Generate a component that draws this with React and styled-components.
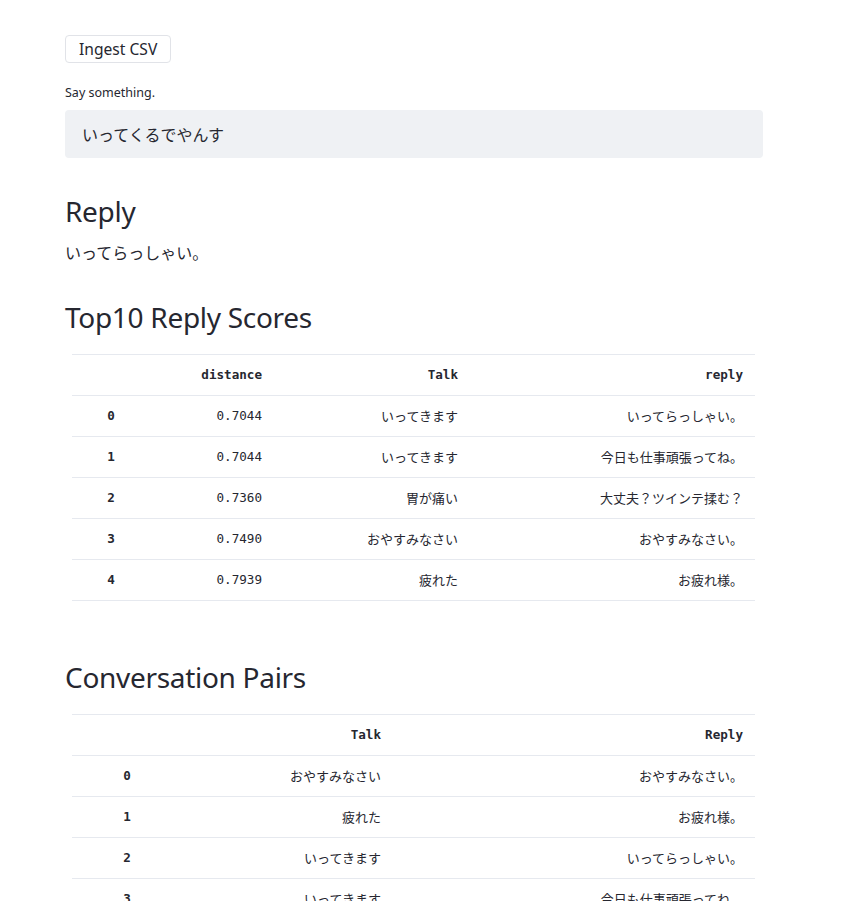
import React from "react";
import styled, { createGlobalStyle } from "styled-components";

const GlobalStyle = createGlobalStyle`
  body {
    margin: 0;
    background: #ffffff;
    color: #262730;
    font-family: "Noto Sans", "Noto Sans CJK JP", sans-serif;
  }
`;

const Main = styled.main`
  width: 698px;
  padding: 35px 0 0 65px;
`;

const Button = styled.button`
  display: block;
  height: 28px;
  padding: 0 13px;
  background: #fff;
  border: 1px solid #e1e3e8;
  border-radius: 4px;
  color: #262730;
  font-family: "Noto Sans", sans-serif;
  font-size: 15.6px;
  line-height: 26px;
`;

const Label = styled.label`
  display: block;
  margin-top: 20px;
  font-size: 12.5px;
  line-height: 20px;
`;

const Input = styled.div`
  margin-top: 7px;
  height: 48px;
  padding: 0 17px;
  display: flex;
  align-items: center;
  background: #eff1f4;
  border-radius: 4px;
  font-family: "Noto Sans CJK JP", sans-serif;
  font-size: 16px;
`;

const Heading = styled.h2`
  margin: ${p => p.$top}px 0 0;
  font-weight: 400;
  font-size: 28px;
  line-height: 36px;
  letter-spacing: -0.3px;
`;

const ReplyText = styled.p`
  margin: 10px 0 0;
  font-family: "Noto Sans CJK JP", sans-serif;
  font-size: 16px;
  line-height: 26px;
`;

const Table = styled.table`
  margin: 19px 0 0 7px;
  width: 683px;
  table-layout: fixed;
  border-collapse: collapse;
  border-top: 1px solid #e6e9ef;
`;

const Th = styled.th`
  height: 38px;
  padding: 0 12px 2px;
  border-bottom: 1px solid #e6e9ef;
  text-align: ${p => (p.$center ? "center" : "right")};
  font-family: "DejaVu Sans Mono", monospace;
  font-weight: 700;
  font-size: 12.6px;
  color: #262730;
`;

const Td = styled.td`
  height: 38px;
  padding: 0 12px 2px;
  border-bottom: 1px solid #e6e9ef;
  text-align: right;
  font-family: ${p => (p.$mono ? '"DejaVu Sans Mono", monospace' : '"Noto Sans CJK JP", sans-serif')};
  font-size: ${p => (p.$mono ? "12.6px" : "13px")};
  color: #262730;
`;

const scores = [
  ["0.7044", "いってきます", "いってらっしゃい。"],
  ["0.7044", "いってきます", "今日も仕事頑張ってね。"],
  ["0.7360", "胃が痛い", "大丈夫？ツインテ揉む？"],
  ["0.7490", "おやすみなさい", "おやすみなさい。"],
  ["0.7939", "疲れた", "お疲れ様。"],
];

const pairs = [
  ["おやすみなさい", "おやすみなさい。"],
  ["疲れた", "お疲れ様。"],
  ["いってきます", "いってらっしゃい。"],
  ["いってきます", "今日も仕事頑張ってね。"],
];

export default function App() {
  return (
    <>
      <GlobalStyle />
      <Main>
        <Button>Ingest CSV</Button>
        <Label>Say something.</Label>
        <Input>いってくるでやんす</Input>

        <Heading $top={35}>Reply</Heading>
        <ReplyText>いってらっしゃい。</ReplyText>

        <Heading $top={34}>Top10 Reply Scores</Heading>
        <Table>
          <colgroup>
            <col style={{ width: 78 }} />
            <col style={{ width: 124 }} />
            <col style={{ width: 196 }} />
            <col />
          </colgroup>
          <thead>
            <tr>
              <Th />
              <Th>distance</Th>
              <Th>Talk</Th>
              <Th>reply</Th>
            </tr>
          </thead>
          <tbody>
            {scores.map((r, i) => (
              <tr key={i}>
                <Th $center>{i}</Th>
                <Td $mono>{r[0]}</Td>
                <Td>{r[1]}</Td>
                <Td>{r[2]}</Td>
              </tr>
            ))}
          </tbody>
        </Table>

        <Heading $top={58}>Conversation Pairs</Heading>
        <Table>
          <colgroup>
            <col style={{ width: 110 }} />
            <col style={{ width: 211 }} />
            <col />
          </colgroup>
          <thead>
            <tr>
              <Th />
              <Th>Talk</Th>
              <Th>Reply</Th>
            </tr>
          </thead>
          <tbody>
            {pairs.map((r, i) => (
              <tr key={i}>
                <Th $center>{i}</Th>
                <Td>{r[0]}</Td>
                <Td>{r[1]}</Td>
              </tr>
            ))}
          </tbody>
        </Table>
      </Main>
    </>
  );
}
